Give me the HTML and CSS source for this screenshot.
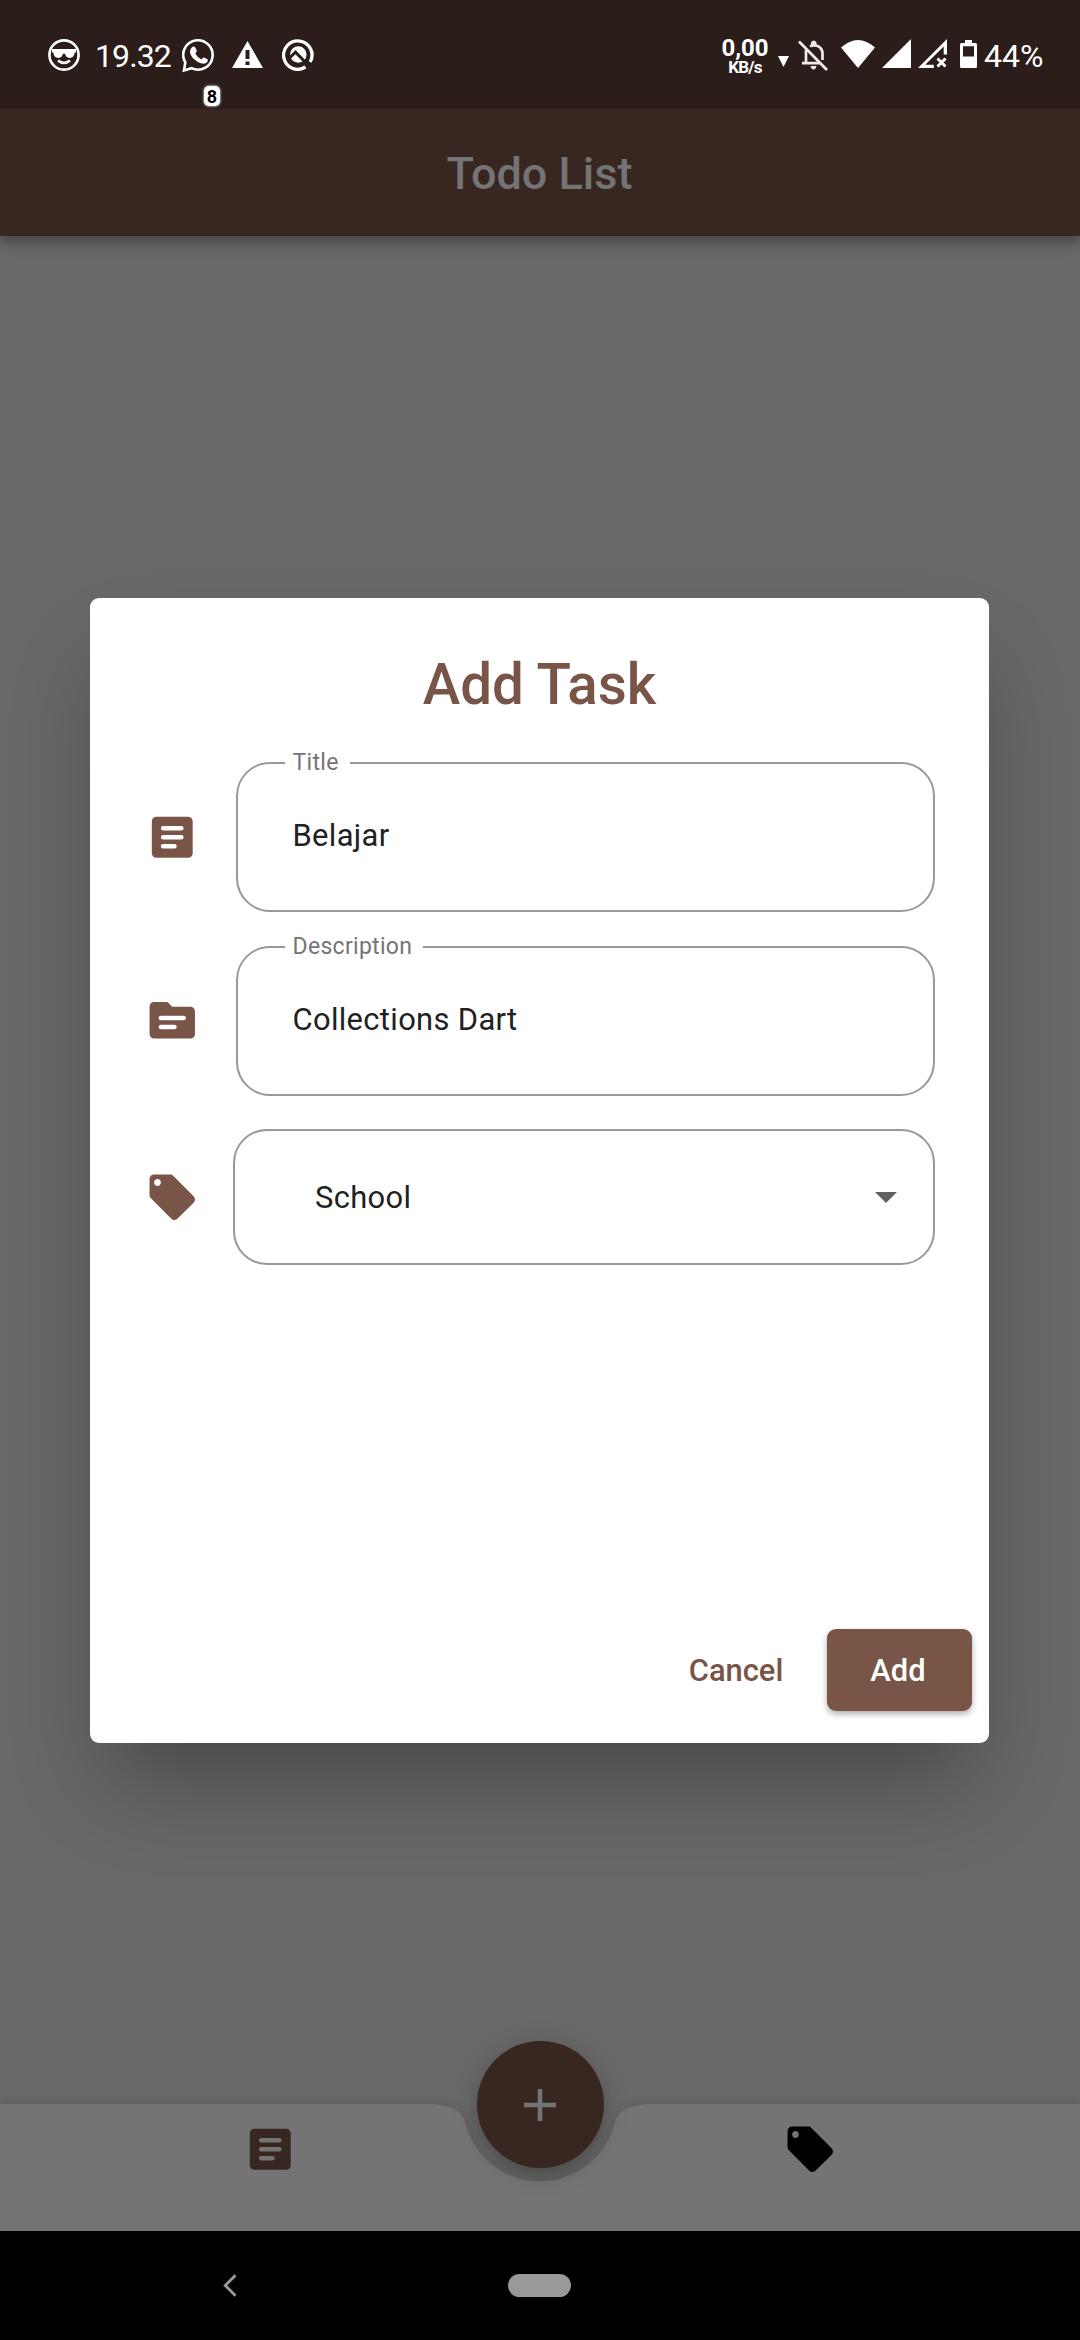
FILE: index.html
```html
<!DOCTYPE html>
<html lang="en">
<head>
<meta charset="utf-8">
<title>Todo List</title>
<link rel="stylesheet" href="styles.css">
</head>
<body>
<svg class="defs" width="0" height="0">
  <symbol id="article" viewBox="0 0 24 24"><path fill-rule="evenodd" d="M19 3H5c-1.100 0-2 .9-2 2v14c0 1.100.9 2 2 2h14c1.100 0 2-.9 2-2V5c0-1.100-.9-2-2-2zM13 17H8a1 1 0 0 1 0-2h5a1 1 0 0 1 0 2zm3-4H8a1 1 0 0 1 0-2h8a1 1 0 0 1 0 2zm0-4H8a1 1 0 0 1 0-2h8a1 1 0 0 1 0 2z"/></symbol>
  <symbol id="folder" viewBox="0 0 24 24"><path fill-rule="evenodd" d="M20 6h-8l-1.410-1.410C10.210 4.210 9.700 4 9.170 4H4c-1.100 0-1.990.9-1.990 2L2 18c0 1.100.9 2 2 2h16c1.100 0 2-.9 2-2V8c0-1.100-.9-2-2-2zM13 16H7a1 1 0 0 1 0-2h6a1 1 0 0 1 0 2zm4-4H7a1 1 0 0 1 0-2h10a1 1 0 0 1 0 2z"/></symbol>
  <symbol id="tag" viewBox="0 0 24 24"><path d="M21.410 11.580l-9-9C12.050 2.220 11.550 2 11 2H4c-1.100 0-2 .9-2 2v7c0 .550.220 1.050.590 1.420l9 9c.360.360.860.580 1.410.580s1.050-.220 1.410-.590l7-7c.370-.360.590-.860.590-1.410s-.230-1.060-.590-1.420zM5.500 7C4.670 7 4 6.330 4 5.500S4.670 4 5.500 4 7 4.670 7 5.500 6.330 7 5.500 7z"/></symbol>
</svg>

<div class="screen">
  <header class="status">
    <svg class="face" viewBox="0 0 32 32"><circle cx="16" cy="16" r="14.600" fill="none" stroke="#fff" stroke-width="2.600"/><path fill="#fff" d="M4 10h24v3.500h-1.300c-.4 3.600-2 5.400-5 5.400-3 0-4-2-4.700-4.200h-2c-.7 2.200-1.700 4.200-4.700 4.200-3 0-4.600-1.800-5-5.400H4z"/><path d="M10 21.500q6 4.800 12 0" fill="none" stroke="#fff" stroke-width="2.800"/></svg>
    <span class="clock">19.32</span>
    <div class="chat">
      <svg viewBox="0 0 33 35"><path d="M3.300 24.500A14.700 14.700 0 1 1 9.500 30.200L2 32.500Z" fill="none" stroke="#fff" stroke-width="2.600"/><path fill="#fff" d="M10 9.200q2-1.600 3.300.2l1.500 3.300q.2 1-1.500 2.800 2 4.200 6.200 6 1.700-2.300 2.700-1.900l3.300 1.700q.8.500-.2 2.600-2.300 2.700-6.300 1.300-8.300-2.900-10.700-9.500-1-3.900 1.700-6.500z"/></svg>
      <span class="badge">8</span>
    </div>
    <svg class="warn" viewBox="0 0 31 28"><path fill="#fff" fill-rule="evenodd" d="M15.500 0 31 27H0zM13.500 9h4v9h-4zM13.500 20.500h4v3.500h-4z"/></svg>
    <svg class="lens" viewBox="0 0 32 32"><circle cx="16.300" cy="15.500" r="8.300" fill="#fff"/><path d="M6 20.500 13.500 13.200 26 26" fill="none" stroke="#2a1d1a" stroke-width="3"/><path d="M23.500 28A14.200 14.200 0 1 1 28.200 23" fill="none" stroke="#fff" stroke-width="3.300"/></svg>

    <div class="rate"><b>0,00</b><i>KB/s</i></div>
    <svg class="down" viewBox="0 0 11 11"><path fill="#fff" d="M0 0h11L5.500 11z"/></svg>
    <svg class="bell" viewBox="0 0 30 31"><g fill="none" stroke="#f0ecec" stroke-width="2.700"><path d="M1 1.500 29 30"/><path d="M8 10v13M4 23.200h18M12 6.500q3-2 7-.7 5.500 2 5.500 8.200v6"/></g><path fill="#f0ecec" d="M13 5V2.500q2.800-4 5.500 0V5zM12.500 26h6q-.8 3.500-3 3.500t-3-3.500z"/></svg>
    <svg class="wifi" viewBox="0 0 34 28"><path fill="#fff" d="M0 7.500Q17-7.500 34 7.500L17 28z"/></svg>
    <svg class="sig1" viewBox="0 0 29 29"><path fill="#fff" d="M0 29 29 0v29z"/></svg>
    <svg class="sig2" viewBox="0 0 30 29"><path fill="#fff" fill-rule="evenodd" d="M0 29 29 0v15.500h-3.300V7.500L7.200 25.800h8.600V29z"/><path d="m19.500 19.500 8 8m0-8-8 8" stroke="#fff" stroke-width="2.900"/></svg>
    <svg class="batt" viewBox="0 0 17 28"><path fill="#fff" fill-rule="evenodd" d="M5 0h7v3h3.500Q17 3 17 4.500v22Q17 28 15.500 28h-14Q0 28 0 26.500v-22Q0 3 1.500 3H5zM3 6.200v10.300h11V6.200z"/></svg>
    <span class="percent">44%</span>
  </header>

  <div class="appbar"><h1>Todo List</h1></div>
  <main class="content"></main>

  <nav class="tabs">
    <svg class="shape" viewBox="0 0 1080 127"><path d="M0 0H426.600Q460.600 0 465.100 18.300A77.100 77.100 0 0 0 614.900 18.300Q619.400 0 653.400 0H1080V127H0Z"/></svg>
    <svg class="icon tab-active"><use href="#article"/></svg>
    <svg class="icon tab-idle"><use href="#tag"/></svg>
    <div class="fab"><svg viewBox="0 0 32 32"><path d="M16 0v32M0 16h32" stroke="#747474" stroke-width="4.600"/></svg></div>
  </nav>

  <footer class="system">
    <svg class="back" viewBox="0 0 14 23"><path d="M12.500 1.300 2.300 11.500l10.200 10.200" fill="none" stroke="#999" stroke-width="2.900"/></svg>
    <span class="home"></span>
  </footer>

  <section class="dialog">
    <h2>Add Task</h2>
    <div class="rows">
      <div class="row"><svg class="icon"><use href="#article"/></svg>
        <div class="field"><label>Title</label><span>Belajar</span></div></div>
      <div class="row"><svg class="icon"><use href="#folder"/></svg>
        <div class="field"><label>Description</label><span>Collections Dart</span></div></div>
      <div class="row"><svg class="icon"><use href="#tag"/></svg>
        <div class="field select"><span>School</span><svg class="arrow" viewBox="0 0 22 11"><path fill="#616161" d="M0 0h22L11 11z"/></svg></div></div>
    </div>
    <div class="actions"><button class="cancel">Cancel</button><button class="add">Add</button></div>
  </section>
</div>
</body>
</html>
```
FILE: styles.css
```css
* { box-sizing: border-box; }
body { margin: 0; font-family: Roboto, sans-serif; background: #000; }
svg { display: block; flex: none; }
.defs { position: absolute; }
h1, h2 { margin: 0; font-weight: 500; }
.screen { position: relative; width: 1080px; height: 2340px; display: flex; flex-direction: column; overflow: hidden; }

.status { position: relative; z-index: 2; height: 109px; background: #2a1d1a; color: #fff; display: flex; align-items: flex-start; padding: 0 37px 0 48px; flex: none; }
.face { width: 32px; height: 32px; margin-top: 39px; }
.clock, .percent { font-size: 32px; line-height: 38px; margin-top: 37px; white-space: nowrap; }
.clock { width: 87px; margin-left: 15px; letter-spacing: -.9px; }
.chat { position: relative; width: 33px; margin-top: 38px; }
.chat svg { width: 33px; height: 35px; }
.badge { position: absolute; left: 22px; top: 48px; width: 16px; height: 20px; border-radius: 5px; background: #fff; box-shadow: 0 0 2px 1px rgba(255,255,255,.5); color: #000; font: 700 18px/21px Roboto, sans-serif; text-align: center; }
.warn { width: 31px; height: 28px; margin: 41px 0 0 17px; }
.lens { width: 32px; height: 32px; margin: 39px 0 0 19px; }
.rate { margin: 37px 0 0 auto; width: 48px; display: flex; flex-direction: column; align-items: center; }
.rate b { font-weight: 700; font-size: 24px; line-height: 23px; }
.rate i { font-style: normal; font-weight: 700; font-size: 17px; line-height: 14px; letter-spacing: -.8px; }
.down { width: 11px; height: 11px; margin: 56px 0 0 9px; }
.bell { width: 30px; height: 31px; margin: 40px 0 0 9px; }
.wifi { width: 34px; height: 28px; margin: 40px 0 0 13px; }
.sig1 { width: 29px; height: 29px; margin: 39px 0 0 7px; }
.sig2 { width: 30px; height: 29px; margin: 39px 0 0 7px; }
.batt { width: 17px; height: 28px; margin: 40px 0 0 12px; }
.percent { width: 59px; margin-left: 7px; }

.appbar { height: 127px; flex: none; background: #382721; color: #747474; display: flex; align-items: center; justify-content: center; box-shadow: 0 7px 9px rgba(0,0,0,.2), 0 2px 20px rgba(0,0,0,.18); z-index: 1; }
h1 { font-size: 45px; line-height: 53px; margin: 2px 1px 0 0; }
.content { flex: 1; background: #686868; }

.tabs { position: relative; height: 127px; flex: none; background: #686868; display: grid; grid-template-columns: 1fr 1fr; justify-items: center; padding-top: 18px; }
.shape { position: absolute; inset: 0; width: 1080px; height: 127px; fill: #747474; overflow: visible; filter: drop-shadow(0 -1px 5px rgba(0,0,0,.12)); }
.icon { position: relative; width: 54.500px; height: 54.500px; }
.tab-active { fill: #382721; }
.tab-idle { fill: #000; }
.fab { position: absolute; left: 476.500px; top: -63px; width: 127px; height: 127px; border-radius: 50%; background: #382721; display: flex; align-items: center; justify-content: center; box-shadow: 0 8px 12px rgba(0,0,0,.16), 0 4px 28px rgba(0,0,0,.14); }
.fab svg { width: 32px; height: 32px; }

.system { position: relative; z-index: 1; height: 109px; flex: none; background: #000; display: flex; padding: 43px 0 0 223px; }
.back { width: 14px; height: 23px; }
.home { width: 63px; height: 23px; margin-left: 271px; border-radius: 12px; background: #999; }

.dialog { position: absolute; z-index: 3; left: 90px; top: 597.500px; width: 899px; height: 1145px; padding: 0 17px 32px 54.500px; border-radius: 9px; background: #fff; display: flex; flex-direction: column; box-shadow: 0 53px 88px -19px rgba(0,0,0,.32); }
h2 { width: 790px; margin-top: 53px; text-align: center; color: #795548; font-size: 56.500px; line-height: 68px; }
.rows { margin-top: 43.500px; display: flex; flex-direction: column; gap: 33.500px; }
.row { display: flex; align-items: center; justify-content: space-between; width: 790.500px; fill: #795548; }
.field { position: relative; width: 699.500px; height: 150px; border: 2px solid #999; border-radius: 34px; padding-left: 55px; display: flex; align-items: center; color: #212121; }
.field span { font-size: 30.900px; line-height: 38px; letter-spacing: .34px; margin-top: -2px; }
.field label { position: absolute; left: 47px; top: -15px; padding: 0 11px 0 8px; background: #fff; color: #757575; font-size: 23px; line-height: 28px; letter-spacing: .3px; }
.field.select { width: 702px; height: 136px; padding: 0 36px 0 80px; justify-content: space-between; }
.field.select span { margin-top: 2px; }
.arrow { width: 22px; height: 11px; margin-top: 1px; }
.actions { margin-top: auto; display: flex; justify-content: flex-end; gap: 8px; }
button { height: 81.500px; border: 0; border-radius: 9px; padding: 2px 0 0; font: 500 30.900px/38px Roboto, sans-serif; }
.cancel { width: 166px; background: none; color: #795548; }
.add { width: 145px; padding-right: 3px; background: #795548; color: #fff; box-shadow: 0 3px 6px rgba(0,0,0,.32); }
```
